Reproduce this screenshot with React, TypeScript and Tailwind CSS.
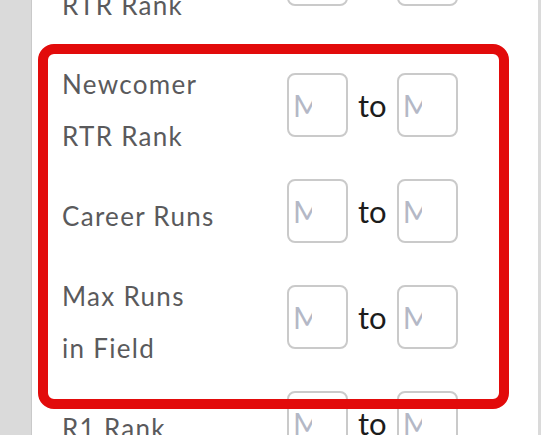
import { Fragment } from "react";

type RangeRow = {
  label: string[];
};

const rows: RangeRow[] = [
  { label: ["Veteran", "RTR Rank"] },
  { label: ["Newcomer", "RTR Rank"] },
  { label: ["Career Runs"] },
  { label: ["Max Runs", "in Field"] },
  { label: ["R1 Rank"] },
];

function RangeInput({ placeholder }: { placeholder: string }) {
  return (
    <input
      type="text"
      placeholder={placeholder}
      className="h-[64px] w-[61px] rounded-[8px] border-2 border-[#cacaca] bg-white pl-[4px] pr-[34px] text-[30px] text-[#222] outline-none placeholder:text-[#b4b8c6]"
    />
  );
}

function FilterRow({ row }: { row: RangeRow }) {
  return (
    <div className="flex items-center">
      <div className="w-[225px] text-[26px] leading-[52px] tracking-[1.3px] text-[#5a5a5c]">
        {row.label.map((line, i) => (
          <Fragment key={i}>
            <div className="h-[52px]">{line}</div>
          </Fragment>
        ))}
      </div>
      <div className="-mt-[10px] flex items-center">
        <RangeInput placeholder="Min" />
        <span className="mx-[10px] text-[31px] leading-none text-[#1c1c1c]">to</span>
        <RangeInput placeholder="Max" />
      </div>
    </div>
  );
}

export default function App() {
  return (
    <div
      className="flex h-[435px] w-[541px] overflow-hidden bg-[#dadada]"
      style={{ fontFamily: "Lato, 'Open Sans', sans-serif" }}
    >
      <div className="relative ml-[31px] w-[507px] border-l border-[#c9c9c9] bg-white">
        <div className="-mt-[73px] flex flex-col gap-[27px] pl-[30px]">
          {rows.map((row, i) => (
            <FilterRow key={i} row={row} />
          ))}
        </div>
        {/* highlight around the newcomer / career / field filters */}
        <div className="pointer-events-none absolute left-[6px] top-[44px] h-[365px] w-[471px] rounded-[16px] border-[10px] border-[#e20b0b]" />
      </div>
    </div>
  );
}
